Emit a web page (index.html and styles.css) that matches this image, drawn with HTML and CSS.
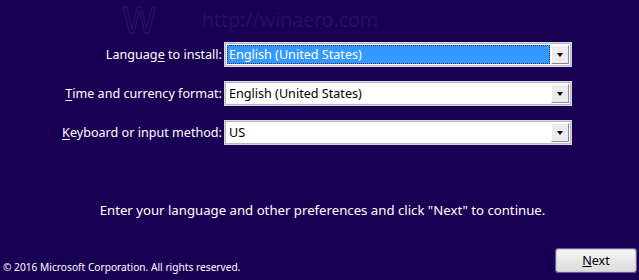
FILE: index.html
```html
<!DOCTYPE html>
<html lang="en">
<head>
  <meta charset="UTF-8">
  <meta name="viewport" content="width=device-width, initial-scale=1.0">
  <title>Windows Setup</title>
  <link rel="stylesheet" href="styles.css">
</head>
<body>
  <div class="setup">
    <div class="watermark">
      <span class="wm-logo">W</span>
      <span class="wm-url">http://winaero.com</span>
    </div>

    <div class="options">
      <label class="opt-label">Languag<u>e</u> to install:</label>
      <div class="combo">
        <div class="combo-value selected"><span>English (United States)</span></div>
        <div class="combo-arrow"></div>
      </div>

      <label class="opt-label"><u>T</u>ime and currency format:</label>
      <div class="combo">
        <div class="combo-value"><span>English (United States)</span></div>
        <div class="combo-arrow"></div>
      </div>

      <label class="opt-label"><u>K</u>eyboard or input method:</label>
      <div class="combo">
        <div class="combo-value"><span>US</span></div>
        <div class="combo-arrow"></div>
      </div>
    </div>

    <p class="hint">Enter your language and other preferences and click "Next" to continue.</p>

    <div class="footer">
      <span class="copyright">&copy; 2016 Microsoft Corporation. All rights reserved.</span>
      <button class="next-btn"><u>N</u>ext</button>
    </div>
  </div>
</body>
</html>
```

FILE: styles.css
```css
*{ margin: 0; padding: 0; box-sizing: border-box; }
html, body{ width: 639px; height: 280px; overflow: hidden; }
body{ background: #1a0055; color: #ffffff; font-family: "Noto Sans", "Open Sans", sans-serif; font-size: 12px; }

.setup{ height: 280px; display: flex; flex-direction: column; }

.watermark{ height: 42px; display: flex; align-items: flex-start; padding-left: 122px; }
.wm-logo{ font-family: "DejaVu Sans", sans-serif; font-size: 35px; line-height: 42px; -webkit-text-stroke: 1px #2a156e; color: transparent; width: 80px; }
.wm-url{ font-size: 19.5px; line-height: 24px; margin-top: 8px; color: #241066; }

.options{ display: grid; grid-template-columns: 222px 348px; row-gap: 14px; column-gap: 2px; align-items: center; }
.opt-label{ text-align: right; font-size: 12.6px; }
.opt-label u{ text-underline-offset: 2px; }

.combo{ height: 25px; display: flex; background: #ffffff; border: 1px solid #d8d6e4; box-shadow: inset 0 0 0 1px #b9b7c7; padding: 2px; }
.combo-value{ flex: 1; display: flex; align-items: center; color: #000000; font-size: 12.6px; padding-left: 2px; }
.combo-value.selected{ background: #3399ff; color: #ffffff; outline: 1px dotted #333355; outline-offset: -1px; }
.combo-arrow{ width: 18px; margin-left: 1px; background: #ececec; border: 1px solid #ffffff; border-right-color: #8a8a8a; border-bottom-color: #8a8a8a; position: relative; }
.combo-arrow::after{ content: ""; position: absolute; left: 5px; top: 7px; border-left: 3px solid transparent; border-right: 3px solid transparent; border-top: 4px solid #000000; }

.hint{ margin-top: 56px; text-align: center; font-size: 13.2px; padding-left: 6px; }

.footer{ margin-top: auto; height: 35px; display: flex; align-items: center; justify-content: space-between; padding: 0 3px 1px 3px; }
.copyright{ font-size: 10.2px; margin-top: 10px; }
.next-btn{ width: 80px; height: 23px; margin-bottom: 4px; font-family: inherit; font-size: 12.6px; color: #000000; border: 1px solid #d0d0d0; border-radius: 2px; background: linear-gradient(#f4f4f4, #dcdcdc); box-shadow: 0 0 0 1px #6a5a9a; }
```
